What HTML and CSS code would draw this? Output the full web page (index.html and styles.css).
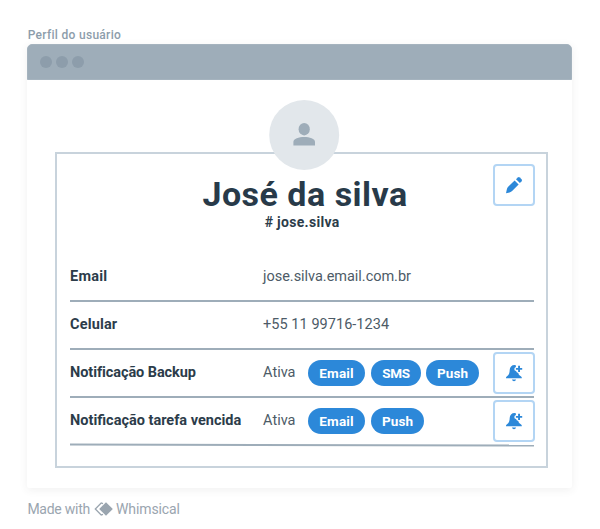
FILE: index.html
```
<!DOCTYPE html>
<html lang="pt-BR">
<head>
<meta charset="utf-8">
<title>Perfil do usuário</title>
<link rel="stylesheet" href="styles.css">
</head>
<body>
<svg width="0" height="0" class="defs" aria-hidden="true">
  <symbol id="bell" viewBox="0 0 18 18">
    <path d="M10.6 1C6.8.6 4.8 2.8 4.7 6C4.6 9.4 3.8 11 2 12.3Q.8 13.2 1 14.2H16.8Q17 13 15.8 12.2C14.2 11.2 13.5 10.2 13.3 8.9Q11.2 8.8 11.1 7.1Q9.3 6.7 9.3 4.9Q9.3 3.2 11 2.9Z"/>
    <path d="M6.9 15.4H11.1Q10.6 17.2 9 17.2Q7.4 17.2 6.9 15.4Z"/>
    <path d="M13.1 1.8H15V4H17.2V5.8H15V8H13.1V5.8H10.9V4H13.1Z"/>
  </symbol>
</svg>
<div class="caption">Perfil do usuário</div>
<main class="window">
  <header class="titlebar"><i class="dot"></i><i class="dot"></i><i class="dot"></i></header>
  <section class="card">
    <div class="avatar">
      <svg width="24" height="26" viewBox="0 0 24 26"><ellipse cx="12" cy="7.2" rx="5.6" ry="6.2"/><path d="M1.2 23.6V20C1.2 13.4 22.8 13.4 22.8 20V23.6Z"/></svg>
    </div>
    <div class="profile">
      <h1 class="name">José da silva</h1>
      <div class="handle"># jose.silva</div>
      <button class="action edit" aria-label="Editar">
        <svg width="18" height="18" viewBox="0 0 18 18"><path d="M1 17.2L1.8 13.4Q2.2 11.8 3.4 10.6L9.6 4.6L13.6 8.6L7.4 14.8Q6.2 16 4.6 16.5Z"/><path d="M11 3.2L12.8 1.5Q13.8.6 14.8 1.5L16.6 3.3Q17.5 4.3 16.6 5.3L14.9 7.1Z"/></svg>
      </button>
    </div>
    <div class="row"><b class="label email">Email</b><div class="value mail">jose.silva.email.com.br</div></div>
    <div class="row"><b class="label cell">Celular</b><div class="value phone">+55 11 99716-1234</div></div>
    <div class="row"><b class="label backup">Notificação Backup</b><div class="value"><span class="state">Ativa</span>
      <span class="pill wide">Email</span><span class="pill sms">SMS</span><span class="pill">Push</span></div>
      <button class="action" aria-label="Notificação"><svg width="18" height="18"><use href="#bell"/></svg></button></div>
    <div class="row last"><b class="label task">Notificação tarefa vencida</b><div class="value"><span class="state">Ativa</span>
      <span class="pill wide">Email</span><span class="pill">Push</span></div>
      <button class="action" aria-label="Notificação"><svg width="18" height="18"><use href="#bell"/></svg></button></div>
  </section>
</main>
<footer class="credit">
  <span class="made">Made with</span>
  <svg width="19" height="14" viewBox="0 0 19 14"><path class="outline" d="M9 1.6L7.2 1L1.3 7L7.2 13L9 12.4"/><path d="M12 .2L18.8 7L12 13.8L5.2 7Z"/></svg>
  <span class="brand">Whimsical</span>
</footer>
</body>
</html>
```
FILE: styles.css
```
* { box-sizing: border-box; }
body {
  margin: 0;
  padding: 27px 27.4px 0;
  height: 529px;
  overflow: hidden;
  background: #fff;
  color: #2c3c4a;
  font: 14.5px/20px Roboto, "Liberation Sans", sans-serif;
}
.defs { position: absolute; }
svg { display: block; fill: currentColor; }
.caption { height: 16.6px; padding-left: .3px; font-size: 12px; line-height: 16px; font-weight: 500; letter-spacing: .3px; color: #8d9dab; }
.window {
  width: 545px;
  height: 444px;
  border-radius: 5px 5px 2px 2px;
  background: #fff;
  box-shadow: 0 2px 8px rgba(60, 60, 60, .08);
}
.titlebar {
  display: flex;
  align-items: center;
  gap: 4px;
  height: 36px;
  padding-left: 11.4px;
  border: 1px solid #a5b3be;
  border-radius: 5px 5px 0 0;
  background: #9eadb9;
}
.dot { width: 12px; height: 12px; border-radius: 50%; background: #8d9dab; }
.card {
  width: 493.5px;
  height: 316px;
  margin: 72.4px 0 0 27.2px;
  padding: 0 12px 0 13.5px;
  border: 2px solid #c8d3dc;
}
.avatar {
  display: flex;
  align-items: center;
  justify-content: center;
  width: 70px;
  height: 70px;
  margin: -54px auto 0;
  transform: translateX(2.2px);
  border-radius: 50%;
  background: #e2e7eb;
  color: #9eadb9;
}
.profile { position: relative; height: 83px; padding-top: 4px; text-align: center; }
.name { margin: 0 0 0 6px; font-size: 34px; line-height: 40px; font-weight: 700; letter-spacing: .5px; color: #283a49; }
.handle { height: 16px; line-height: 16px; font-size: 14px; font-weight: 700; letter-spacing: .3px; }
.action {
  display: flex;
  align-items: center;
  justify-content: center;
  flex: none;
  width: 42px;
  height: 42px;
  padding: 0;
  border: 2px solid #b3d5f4;
  border-radius: 4px;
  background: #fff;
  color: #2c88d9;
}
.edit { position: absolute; right: -1px; top: -6px; }
.row { position: relative; display: flex; align-items: center; height: 48px; }
.row::after { content: ""; position: absolute; left: 0; right: 0; bottom: -1px; height: 2px; background: #9eadb9; }
.last::after { transform: rotate(.12deg); }
.row .action { margin-right: -1px; z-index: 1; }
.label { width: 193px; flex: none; font-weight: 700; white-space: nowrap; }
.email { letter-spacing: .2px; }
.cell { letter-spacing: .15px; }
.backup { letter-spacing: -.08px; }
.value { display: flex; align-items: center; flex: 1; color: #4d5b67; white-space: nowrap; }
.phone { letter-spacing: .04px; }
.mail { letter-spacing: -.03px; }
.state { width: 45px; }
.pill {
  display: flex;
  align-items: center;
  justify-content: center;
  width: 53px;
  height: 26px;
  margin-right: 5px;
  border-radius: 13px;
  background: #2c88d9;
  color: #fff;
  font-size: 13.5px;
  font-weight: 700;
  letter-spacing: .15px;
}
.wide { width: 57px; margin-right: 6px; }
.sms { width: 50px; letter-spacing: -.3px; }
.credit { display: flex; align-items: center; height: 20px; margin-top: 11px; color: #9aa5af; font-size: 14px; letter-spacing: -.1px; }
.made { letter-spacing: -.25px; }
.credit svg { margin: 0 3px 0 4px; }
.outline { fill: none; stroke: currentColor; stroke-width: 1.3; }
```
